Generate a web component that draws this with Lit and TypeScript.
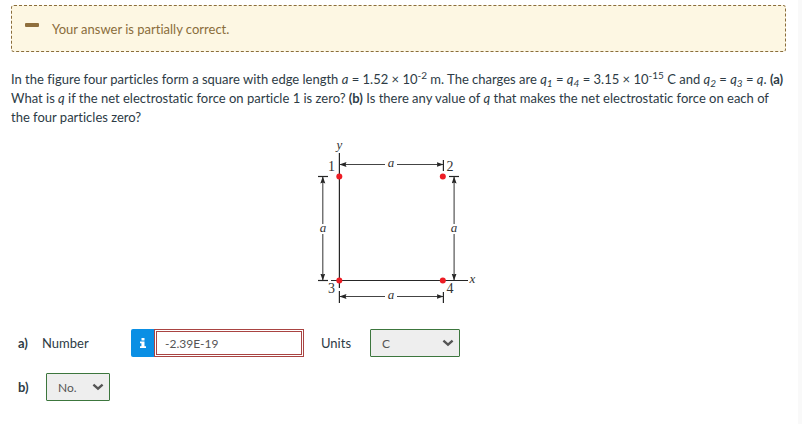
import { LitElement, html, svg, css } from "lit";
import { customElement } from "lit/decorators.js";

const chevron = html`<svg class="chevron" viewBox="0 0 12 8" aria-hidden="true">
  <path d="M1.4 1.6 L6 5.6 L10.6 1.6" fill="none" stroke="#555" stroke-width="2.4" />
</svg>`;

const arrowLine = (x1: number, y1: number, x2: number, y2: number) =>
  svg`<line class="dim" x1=${x1} y1=${y1} x2=${x2} y2=${y2} marker-end="url(#head)" />`;

@customElement("particle-figure")
export class ParticleFigure extends LitElement {
  static styles = css`
    :host {
      display: block;
      line-height: 0;
    }
    svg {
      width: 166px;
      height: 170px;
    }
    .axis,
    .tick {
      stroke: #262626;
      stroke-width: 1.2;
    }
    .dim {
      stroke: #444;
      stroke-width: 1.1;
    }
    .dot {
      fill: #ed1c24;
    }
    text {
      font: 13px "Liberation Serif", serif;
      fill: #333;
      text-anchor: middle;
    }
    .var {
      font-style: italic;
    }
    .num {
      font-size: 14px;
    }
  `;

  render() {
    const dots = [
      [23.3, 38.4],
      [126.8, 38.4],
      [23.3, 142.4],
      [126.8, 142.4],
    ];
    const ticks = [
      [2, 38.5, 12, 38.5],
      [2, 142.5, 12, 142.5],
      [133, 38.5, 143, 38.5],
      [127.4, 22, 127.4, 33],
      [127.4, 154, 127.4, 165],
      [23.4, 153, 23.4, 165],
    ];
    return html`<svg viewBox="0 -2 166 170" role="img" aria-label="Four particles at the corners of a square">
      <defs>
        <marker id="head" markerUnits="userSpaceOnUse" markerWidth="7" markerHeight="6" refX="6.5" refY="2.5" orient="auto">
          <path d="M0 0 L7 2.5 L0 5 L1 2.5 Z" fill="#262626" />
        </marker>
      </defs>
      <line class="axis" x1="23.4" y1="15" x2="23.4" y2="150" />
      <line class="axis" x1="15" y1="142.5" x2="152" y2="142.5" />
      ${ticks.map(([a, b, c, d]) => svg`<line class="tick" x1=${a} y1=${b} x2=${c} y2=${d} />`)}
      ${arrowLine(69, 26.5, 24, 26.5)} ${arrowLine(81, 26.5, 127, 26.5)}
      ${arrowLine(69, 158.5, 24, 158.5)} ${arrowLine(81, 158.5, 127, 158.5)}
      ${arrowLine(6.8, 86, 6.8, 39)} ${arrowLine(6.8, 96, 6.8, 142)}
      ${arrowLine(138.1, 86, 138.1, 39)} ${arrowLine(138.1, 96, 138.1, 142)}
      ${dots.map(([x, y]) => svg`<circle class="dot" cx=${x} cy=${y} r="3" />`)}
      <text class="var" x="23.5" y="11">y</text>
      <text class="var" x="156.5" y="145">x</text>
      <text class="var" x="75" y="29">a</text>
      <text class="var" x="75" y="161">a</text>
      <text class="var" x="7" y="94">a</text>
      <text class="var" x="138" y="94">a</text>
      <text class="num" x="15.5" y="33">1</text>
      <text class="num" x="134" y="33">2</text>
      <text class="num" x="15.5" y="155">3</text>
      <text class="num" x="134" y="155">4</text>
    </svg>`;
  }
}

@customElement("app-root")
export class AppRoot extends LitElement {
  static styles = css`
    :host {
      display: block;
      box-sizing: border-box;
      min-height: 100vh;
      padding: 5px 12px 0 11px;
      border-right: 4px solid #f9f9f9;
      background: #fff;
      color: #2d3b45;
      font: 13px/19px Lato, sans-serif;
      font-variant-ligatures: none;
    }
    * {
      box-sizing: border-box;
    }
    .alert {
      display: flex;
      align-items: center;
      gap: 13px;
      height: 47px;
      padding: 2px 13px 0;
      border: 1px dashed #8a6d3b;
      border-radius: 3px;
      background: #fdf7e3;
      color: #8a6d3b;
    }
    .minus {
      width: 14px;
      height: 4px;
      margin-bottom: 9px;
      border-radius: 1px;
      background: #8f6f3d;
    }
    .question {
      margin: 18px -6px 0 0;
    }
    sup,
    sub {
      position: relative;
      font-size: 10px;
      line-height: 0;
      vertical-align: baseline;
    }
    sup {
      top: -5px;
    }
    sub {
      top: 3px;
    }
    particle-figure {
      margin-top: 9px;
      text-align: center;
    }
    .row {
      display: flex;
      align-items: center;
      padding-left: 7px;
    }
    .row-a {
      margin-top: 23px;
    }
    .row-b {
      margin-top: 16px;
    }
    .part {
      width: 24px;
      font-weight: 700;
    }
    .row-b .part {
      width: 28px;
    }
    .name {
      width: 89px;
    }
    .units {
      width: 49px;
      margin-left: 17px;
    }
    .info {
      width: 23px;
      height: 28px;
      padding: 0;
      border: 0;
      border-radius: 2px 0 0 2px;
      background: #0a8fe4;
      line-height: 0;
    }
    .info svg {
      width: 6px;
      height: 10px;
    }
    .number {
      width: 150px;
      height: 28px;
      padding: 0 8px;
      border: 3px double #a94442;
      border-radius: 0;
      background: #fff;
      color: #555;
      font: inherit;
      font-size: 12px;
      outline: 0;
    }
    .pick {
      position: relative;
      display: block;
      width: 90px;
    }
    .pick.small {
      width: 64px;
    }
    select {
      display: block;
      width: 100%;
      height: 28px;
      padding: 0 11px;
      border: 1px solid #3c763d;
      border-radius: 1px;
      background: #eee;
      color: #555;
      font: inherit;
      font-size: 12px;
      appearance: none;
    }
    .chevron {
      position: absolute;
      right: 6px;
      top: 10px;
      width: 12px;
      height: 8px;
      pointer-events: none;
    }
  `;

  render() {
    return html`
      <div class="alert" role="status"><span class="minus"></span><span>Your answer is partially correct.</span></div>
      <p class="question">
        In the figure four particles form a square with edge length <i>a</i> = 1.52 × 10<sup>-2</sup> m. The charges are
        <i>q<sub>1</sub></i> = <i>q<sub>4</sub></i> = 3.15 × 10<sup>-15</sup> C and <i>q<sub>2</sub></i> =
        <i>q<sub>3</sub></i> = <i>q</i>. <b>(a)</b> What is <i>q</i> if the net electrostatic force on particle 1 is zero?
        <b>(b)</b> Is there any value of <i>q</i> that makes the net electrostatic force on each of the&nbsp;four particles
        zero?
      </p>
      <particle-figure></particle-figure>
      <div class="row row-a">
        <span class="part">a)</span>
        <label class="name" for="number">Number</label>
        <button class="info" type="button" aria-label="Information">
          <svg viewBox="0 0 6 10"><path fill="#fff" d="M1.5 0H4.5V2.4H1.5ZM0 3.5H4.5V8.2H6V10H0V8.2H1.4V5.2H0Z" /></svg>
        </button>
        <input class="number" id="number" type="text" value="-2.39E-19" />
        <label class="units" for="units">Units</label>
        <span class="pick"
          ><select id="units"><option>C</option></select>${chevron}</span
        >
      </div>
      <div class="row row-b">
        <label class="part" for="answer">b)</label>
        <span class="pick small"
          ><select id="answer"><option>No.</option></select>${chevron}</span
        >
      </div>
    `;
  }
}
